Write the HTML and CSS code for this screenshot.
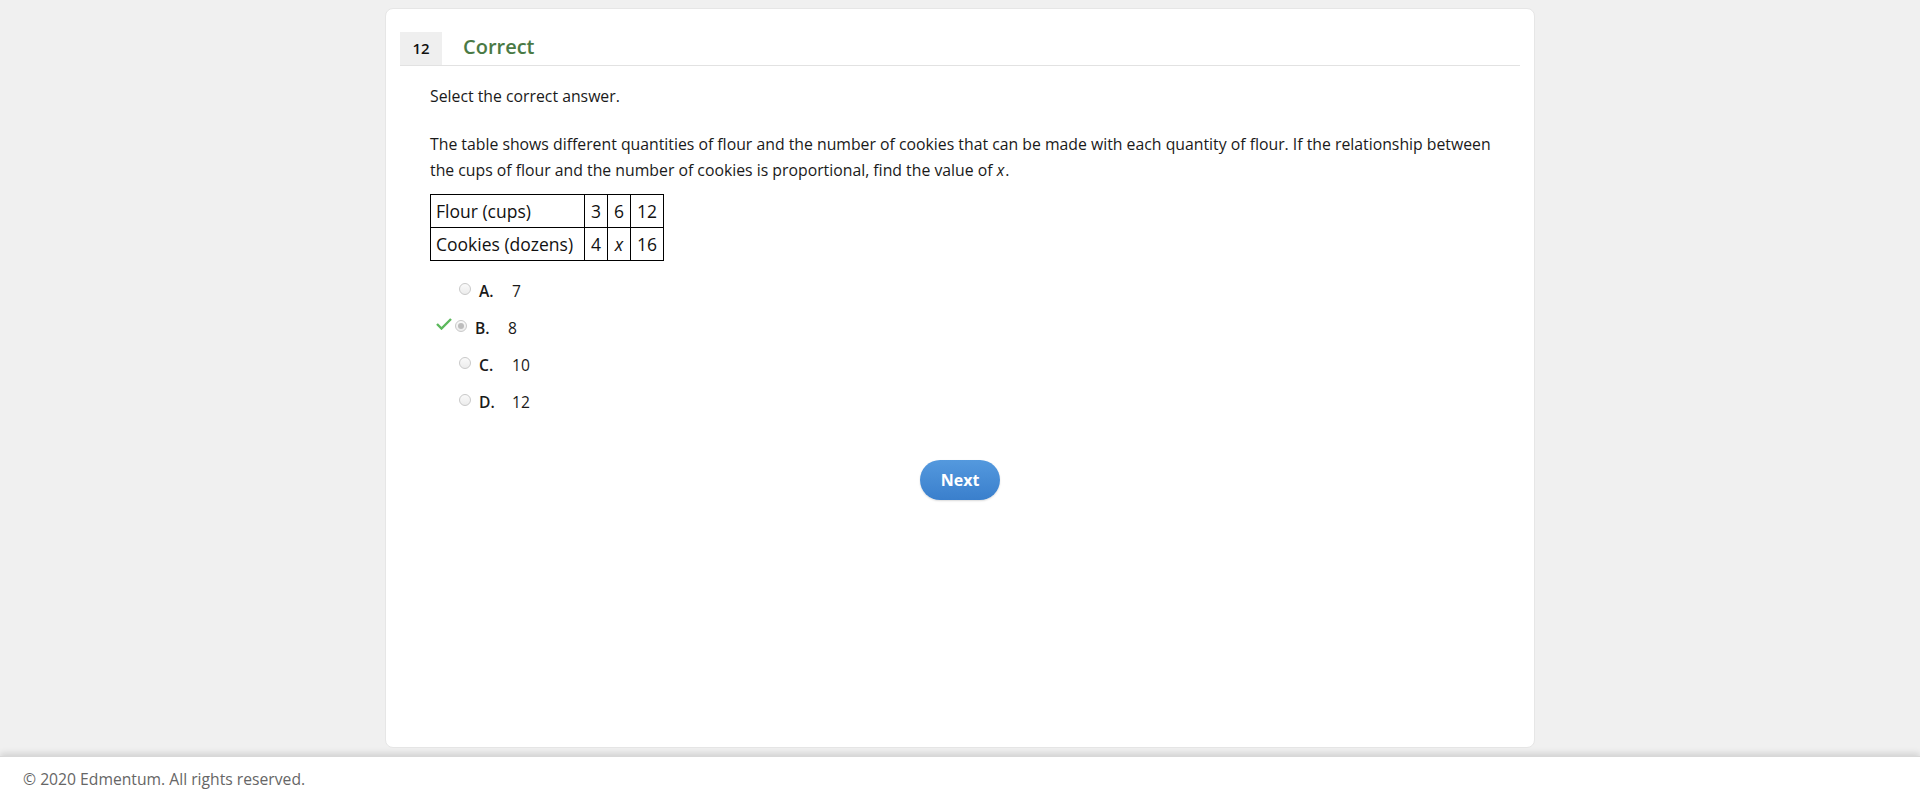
FILE: index.html
```html
<!DOCTYPE html>
<html lang="en">
<head>
    <meta charset="UTF-8">
    <title>Question 12 - Edmentum</title>
    <link rel="stylesheet" href="styles.css">
</head>
<body>
    <main class="page">
        <div class="card">
            <div class="question-header">
                <span class="question-number">12</span>
                <span class="question-status">Correct</span>
            </div>
            <div class="question-body">
                <p class="prompt">Select the correct answer.</p>
                <p class="stem">The table shows different quantities of flour and the number of cookies that can be made with each quantity of flour. If the relationship between the cups of flour and the number of cookies is proportional, find the value of <i>x</i>.</p>
                <table class="data-table">
                    <tr>
                        <td class="label">Flour (cups)</td>
                        <td>3</td>
                        <td>6</td>
                        <td>12</td>
                    </tr>
                    <tr>
                        <td class="label">Cookies (dozens)</td>
                        <td>4</td>
                        <td><i>x</i></td>
                        <td>16</td>
                    </tr>
                </table>
                <ul class="choices">
                    <li class="choice">
                        <span class="radio"></span>
                        <span class="letter">A.</span>
                        <span class="value">7</span>
                    </li>
                    <li class="choice chosen">
                        <svg class="check" width="16" height="12" viewBox="0 0 16 12">
                            <polyline points="1,6 5.5,10.5 15,1" fill="none" stroke="#5cb85c" stroke-width="2.4"/>
                        </svg>
                        <span class="radio selected"></span>
                        <span class="letter">B.</span>
                        <span class="value">8</span>
                    </li>
                    <li class="choice">
                        <span class="radio"></span>
                        <span class="letter">C.</span>
                        <span class="value">10</span>
                    </li>
                    <li class="choice">
                        <span class="radio"></span>
                        <span class="letter">D.</span>
                        <span class="value">12</span>
                    </li>
                </ul>
                <div class="actions">
                    <button class="next-button">Next</button>
                </div>
            </div>
        </div>
    </main>
    <footer class="site-footer">© 2020 Edmentum. All rights reserved.</footer>
</body>
</html>
```

FILE: styles.css
```css
html, body {
    height: 100%;
}
body {
    font-family: 'Open Sans', 'Liberation Sans', sans-serif;
    background-color: #f0f0f0;
    color: #1a1a1a;
    margin: 0;
    padding: 0;
    display: flex;
    flex-direction: column;
}
.page {
    flex: 1;
}
.card {
    width: 1150px;
    height: 740px;
    box-sizing: border-box;
    margin: 8px auto 0;
    background-color: #fff;
    border: 1px solid #e6e6e6;
    border-radius: 8px;
    padding: 23px 14px 0;
}
.question-header {
    display: flex;
    align-items: center;
    border-bottom: 1px solid #e2e2e2;
}
.question-number {
    width: 42px;
    height: 33px;
    line-height: 33px;
    text-align: center;
    background-color: #efefef;
    font-size: 15px;
    font-weight: 600;
    color: #111;
}
.question-status {
    margin-left: 21px;
    font-size: 20px;
    font-weight: 600;
    color: #4a7a45;
    position: relative;
    top: -2px;
}
.question-body {
    padding: 0 15px 0 30px;
}
.prompt,
.stem {
    font-size: 15.8px;
    line-height: 26px;
    margin: 17px 0 0;
}
.stem {
    margin-top: 22px;
}
.stem i {
    margin-right: 1px;
}
.data-table {
    border-collapse: collapse;
    margin-top: 11px;
    font-size: 17.5px;
    color: #111;
}
.data-table td {
    border: 1px solid #000;
    height: 32px;
    padding: 0 6px;
    text-align: center;
}
.data-table td.label {
    text-align: left;
    padding: 0 5px;
    width: 143px;
}
.choices {
    list-style: none;
    margin: 11px 0 0;
    padding: 0;
}
.choice {
    display: flex;
    align-items: center;
    height: 37px;
    padding-left: 29px;
    font-size: 15.6px;
    position: relative;
}
.choice.chosen {
    padding-left: 25px;
}
.check {
    position: absolute;
    left: 6px;
    top: 9px;
}
.radio {
    width: 12px;
    height: 12px;
    box-sizing: border-box;
    border: 1px solid #c9c9c9;
    border-radius: 50%;
    background: linear-gradient(#fafafa, #ececec);
    position: relative;
    top: -2px;
}
.radio.selected::after {
    content: '';
    position: absolute;
    left: 2px;
    top: 2px;
    width: 6px;
    height: 6px;
    border-radius: 50%;
    background-color: #bdbdbd;
}
.letter {
    font-weight: 600;
    margin-left: 8px;
    width: 33px;
}
.actions {
    text-align: center;
    margin: 40px 15px 0 0;
}
.next-button {
    width: 80px;
    height: 40px;
    border: none;
    border-radius: 20px;
    background: linear-gradient(#5499de, #3a7fcc);
    color: #fff;
    font-family: 'Open Sans', 'Liberation Sans', sans-serif;
    font-size: 16px;
    font-weight: 700;
    cursor: pointer;
    box-shadow: 0 1px 2px rgba(0, 0, 0, 0.15);
}
.site-footer {
    height: 45px;
    line-height: 45px;
    background-color: #fff;
    color: #666;
    font-size: 15.7px;
    padding-left: 23px;
    box-shadow: 0 -3px 6px rgba(0, 0, 0, 0.12);
    border-top: 1px solid #d8d8d8;
}
```
